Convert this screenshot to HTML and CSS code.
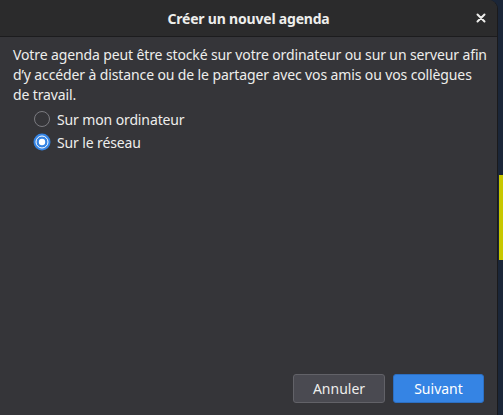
FILE: index.html
```html
<!DOCTYPE html>
<html lang="fr">
<head>
<meta charset="utf-8">
<link rel="stylesheet" href="styles.css">
</head>
<body>
<div class="screen">
  <div class="dialog">
    <div class="titlebar">
      <span class="title">Créer un nouvel agenda</span>
      <span class="close">
        <svg width="10" height="10" viewBox="0 0 10 10"><path d="M1.5 1.5 L8.5 8.5 M8.5 1.5 L1.5 8.5" stroke="#eeeeec" stroke-width="2" stroke-linecap="round"/></svg>
      </span>
    </div>
    <div class="content">
      <p class="intro">Votre agenda peut être stocké sur votre ordinateur ou sur un serveur afin d’y accéder à distance ou de le partager avec vos amis ou vos collègues de travail.</p>
      <div class="options">
        <label class="option">
          <svg class="radio" width="18" height="18" viewBox="0 0 18 18"><circle cx="9" cy="9" r="7.5" fill="none" stroke="#7b7b80" stroke-width="1"/></svg>
          <span>Sur mon ordinateur</span>
        </label>
        <label class="option">
          <svg class="radio" width="18" height="18" viewBox="0 0 18 18"><circle cx="9" cy="9" r="8.5" fill="#3584e4"/><circle cx="9" cy="9" r="6" fill="none" stroke="#ffffff" stroke-width="1"/><circle cx="9" cy="9" r="3.2" fill="#ffffff"/></svg>
          <span>Sur le réseau</span>
        </label>
      </div>
    </div>
    <div class="actions">
      <button class="btn btn-cancel">Annuler</button>
      <button class="btn btn-next">Suivant</button>
    </div>
  </div>
  <div class="outside">
    <div class="stripe"></div>
  </div>
</div>
</body>
</html>
```
FILE: styles.css
```css
* { box-sizing: border-box; }
html, body {
  margin: 0;
  padding: 0;
  width: 503px;
  height: 415px;
  overflow: hidden;
  background: #1b2638;
}
.screen {
  display: flex;
  width: 503px;
  height: 415px;
  font-family: "Noto Sans", "Open Sans", sans-serif;
}
.dialog {
  width: 498px;
  height: 415px;
  display: flex;
  flex-direction: column;
  background: #353539;
  border-right: 1px solid #1a1a1c;
  border-top-right-radius: 9px;
  overflow: hidden;
  color: #eeeeec;
}
.titlebar {
  height: 37px;
  flex: none;
  display: flex;
  align-items: center;
  justify-content: center;
  position: relative;
  background: #2b2b2c;
  border-bottom: 1px solid #1c1c1e;
}
.title {
  font-weight: bold;
  font-size: 14px;
  letter-spacing: -0.2px;
  color: #eeeeec;
}
.close {
  position: absolute;
  right: 11px;
  top: 13px;
  display: flex;
}
.content {
  flex: 1;
  padding: 8px 6px 0 13px;
}
.intro {
  margin: 0;
  font-size: 14px;
  line-height: 20px;
  letter-spacing: -0.12px;
  color: #eeeeec;
}
.options {
  display: flex;
  flex-direction: column;
  gap: 5px;
  padding-left: 20px;
  margin-top: 5px;
}
.option {
  display: flex;
  align-items: center;
  gap: 6px;
  font-size: 14px;
  letter-spacing: -0.12px;
  height: 18px;
}
.radio { flex: none; }
.actions {
  flex: none;
  display: flex;
  justify-content: flex-end;
  gap: 8px;
  padding: 0 13px 12px 0;
}
.btn {
  width: 92px;
  height: 29px;
  border-radius: 3px;
  font-family: "Noto Sans", "Open Sans", sans-serif;
  font-size: 14px;
  color: #eeeeec;
  padding: 0;
}
.btn-cancel {
  background: #4a4a51;
  border: 1px solid #626268;
}
.btn-next {
  width: 91px;
  background: #3584e4;
  border: 1px solid #2c6fc2;
  color: #ffffff;
}
.outside {
  flex: 1;
  display: flex;
  flex-direction: column;
  padding-top: 175px;
  padding-left: 1px;
}
.stripe {
  height: 85px;
  background: #c8c800;
}
```
